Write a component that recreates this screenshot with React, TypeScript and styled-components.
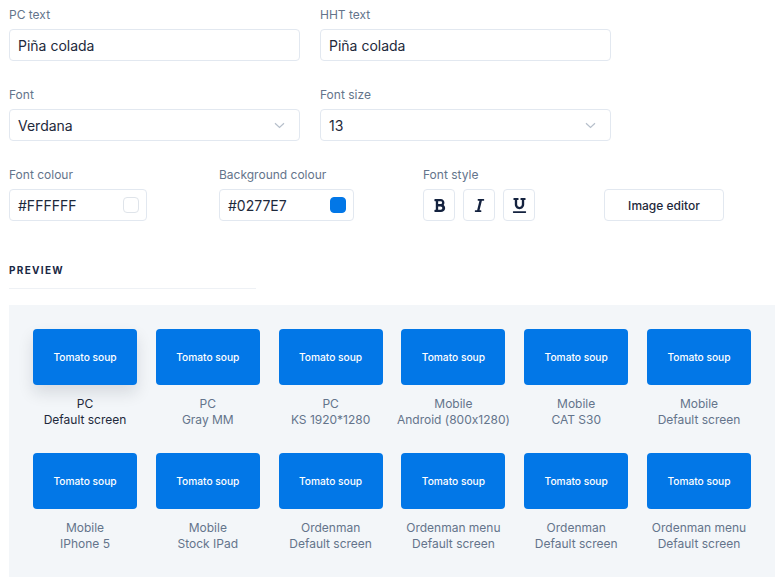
import React from "react";
import styled, { createGlobalStyle } from "styled-components";
import { FaBold, FaItalic, FaUnderline } from "react-icons/fa";

const Global = createGlobalStyle`
  html, body { margin: 0; padding: 0; background: #ffffff; }
  body {
    font-family: Inter, "Noto Sans", sans-serif;
    color: #1e293b;
    font-feature-settings: "calt" 0;
  }
  * { box-sizing: border-box; }
`;

const Page = styled.div`
  padding: 6px 8px 10px 9px;
  display: flex;
  flex-direction: column;
`;

const FieldRow = styled.div`
  display: flex;
  gap: 20px;
  margin-bottom: 25px;
`;

const ToolRow = styled.div`
  display: flex;
  align-items: flex-end;
`;

const Field = styled.div<{ $w: number; $ml?: number }>`
  display: flex;
  flex-direction: column;
  width: ${(p) => p.$w}px;
  margin-left: ${(p) => p.$ml ?? 0}px;
`;

const Label = styled.label`
  font-size: 12px;
  line-height: 18px;
  color: #64748b;
  margin-bottom: 5px;
  height: 18px;
`;

const InputBox = styled.div`
  height: 32px;
  border: 1px solid #e2e8f0;
  border-radius: 4px;
  display: flex;
  align-items: center;
  justify-content: space-between;
  padding: 0 7px 0 8px;
  font-size: 14px;
  color: #1e293b;
  background: #fff;
`;

const Chevron = () => (
  <svg width="11" height="7" viewBox="0 0 11 7" fill="none" style={{ marginRight: 7 }}>
    <path d="M1 1.3 L5.5 5.5 L10 1.3" stroke="#b6bfcb" strokeWidth="1.2" />
  </svg>
);

const Swatch = styled.span<{ $c: string }>`
  width: 16px;
  height: 16px;
  border-radius: 4px;
  background: ${(p) => p.$c};
  border: 1px solid ${(p) => (p.$c === "#FFFFFF" ? "#dfe4ea" : p.$c)};
`;

const StyleRow = styled.div`
  display: flex;
  gap: 8px;
`;

const StyleBtn = styled.button`
  width: 32px;
  height: 32px;
  border: 1px solid #e2e8f0;
  border-radius: 4px;
  background: #fff;
  display: flex;
  align-items: center;
  justify-content: center;
  color: #14223f;
  padding: 0;
`;

const EditorBtn = styled.button`
  width: 120px;
  height: 32px;
  border: 1px solid #e2e8f0;
  border-radius: 4px;
  background: #fff;
  font-family: Inter, sans-serif;
  font-size: 12px;
  font-weight: 500;
  color: #1e293b;
  margin-left: 69px;
  padding: 0;
`;

const SectionTitle = styled.div`
  margin-top: 43px;
  width: 247px;
  padding-bottom: 12px;
  border-bottom: 1px solid #eef1f5;
  font-size: 10px;
  font-weight: 700;
  letter-spacing: 1.3px;
  color: #1a2744;
  line-height: 12px;
`;

const Panel = styled.div`
  margin-top: 16px;
  width: 766px;
  background: #f3f6f9;
  padding: 24px 24px 25px 24px;
  display: grid;
  grid-template-columns: repeat(6, 104px);
  justify-content: space-between;
  row-gap: 25px;
`;

const Item = styled.div`
  display: flex;
  flex-direction: column;
  align-items: center;
`;

const Card = styled.div<{ $active?: boolean }>`
  width: 104px;
  height: 56px;
  border-radius: 4px;
  background: #0277e7;
  color: #ffffff;
  display: flex;
  align-items: center;
  justify-content: center;
  font-size: 10.2px;
  font-weight: 500;
  box-shadow: ${(p) => (p.$active ? "0 8px 16px rgba(15, 23, 42, 0.12)" : "none")};
`;

const Caption = styled.div<{ $active?: boolean }>`
  margin-top: 11px;
  font-size: 12px;
  line-height: 16px;
  text-align: center;
  white-space: nowrap;
  color: ${(p) => (p.$active ? "#1e293b" : "#64748b")};
`;

const items: [string, string][] = [
  ["PC", "Default screen"],
  ["PC", "Gray MM"],
  ["PC", "KS 1920*1280"],
  ["Mobile", "Android (800x1280)"],
  ["Mobile", "CAT S30"],
  ["Mobile", "Default screen"],
  ["Mobile", "IPhone 5"],
  ["Mobile", "Stock IPad"],
  ["Ordenman", "Default screen"],
  ["Ordenman menu", "Default screen"],
  ["Ordenman", "Default screen"],
  ["Ordenman menu", "Default screen"],
];

export default function App() {
  return (
    <>
      <Global />
      <Page>
        <FieldRow>
          <Field $w={291}>
            <Label>PC text</Label>
            <InputBox>Piña colada</InputBox>
          </Field>
          <Field $w={291}>
            <Label>HHT text</Label>
            <InputBox>Piña colada</InputBox>
          </Field>
        </FieldRow>
        <FieldRow>
          <Field $w={291}>
            <Label>Font</Label>
            <InputBox>
              Verdana
              <Chevron />
            </InputBox>
          </Field>
          <Field $w={291}>
            <Label>Font size</Label>
            <InputBox>
              13
              <Chevron />
            </InputBox>
          </Field>
        </FieldRow>
        <ToolRow>
          <Field $w={138}>
            <Label>Font colour</Label>
            <InputBox>
              #FFFFFF
              <Swatch $c="#FFFFFF" />
            </InputBox>
          </Field>
          <Field $w={135} $ml={72}>
            <Label>Background colour</Label>
            <InputBox>
              #0277E7
              <Swatch $c="#0277E7" />
            </InputBox>
          </Field>
          <Field $w={112} $ml={69}>
            <Label>Font style</Label>
            <StyleRow>
              <StyleBtn aria-label="Bold">
                <FaBold size={15} />
              </StyleBtn>
              <StyleBtn aria-label="Italic">
                <FaItalic size={15} />
              </StyleBtn>
              <StyleBtn aria-label="Underline">
                <FaUnderline size={15} />
              </StyleBtn>
            </StyleRow>
          </Field>
          <EditorBtn>Image editor</EditorBtn>
        </ToolRow>
        <SectionTitle>PREVIEW</SectionTitle>
        <Panel>
          {items.map(([a, b], i) => (
            <Item key={i}>
              <Card $active={i === 0}>Tomato soup</Card>
              <Caption $active={i === 0}>
                {a}
                <br />
                {b}
              </Caption>
            </Item>
          ))}
        </Panel>
      </Page>
    </>
  );
}
